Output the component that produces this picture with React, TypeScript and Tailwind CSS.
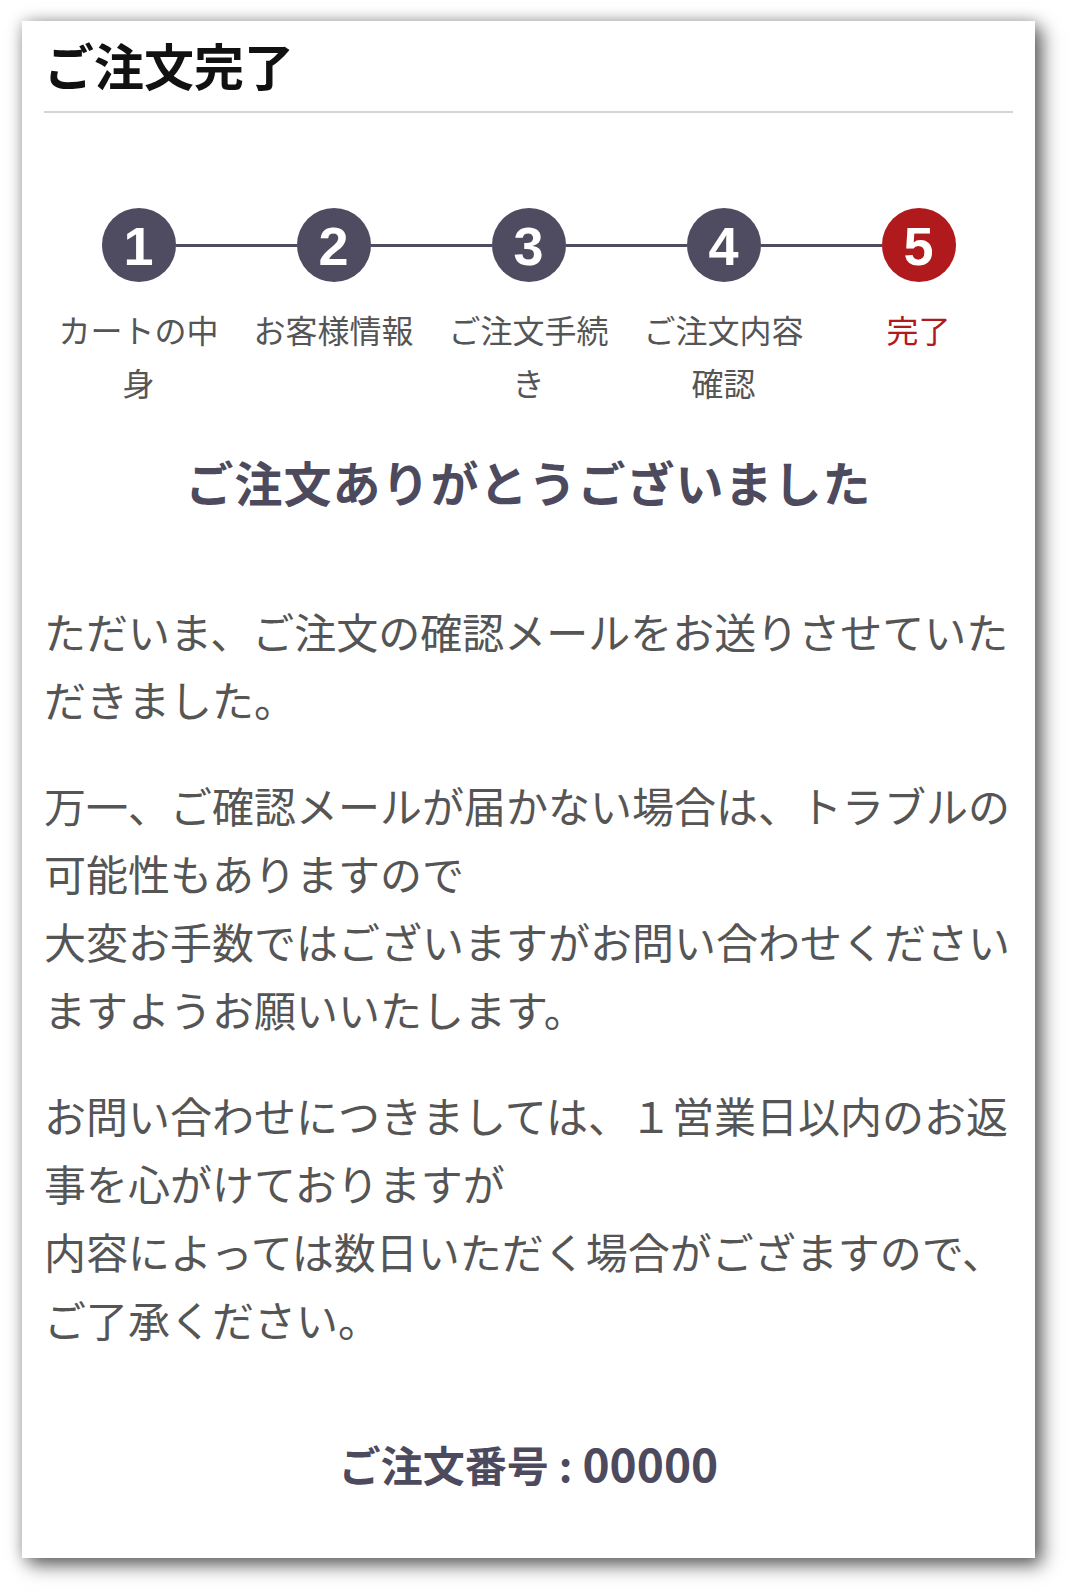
import React from "react";

type Step = { num: number; label: string; active?: boolean };

const steps: Step[] = [
  { num: 1, label: "カートの中身" },
  { num: 2, label: "お客様情報" },
  { num: 3, label: "ご注文手続き" },
  { num: 4, label: "ご注文内容確認" },
  { num: 5, label: "完了", active: true },
];

function StepItem({ step, first, last }: { step: Step; first: boolean; last: boolean }) {
  return (
    <div className="flex w-[195px] shrink-0 flex-col items-center">
      <div className="flex h-[74px] w-full items-center">
        <div className={first ? "h-[3px] flex-1" : "h-[3px] flex-1 bg-[#4f4c61]"} />
        <div
          className={
            step.active
              ? "flex h-[74px] w-[74px] shrink-0 items-center justify-center rounded-full bg-[#b11a1d]"
              : "flex h-[74px] w-[74px] shrink-0 items-center justify-center rounded-full bg-[#4f4c61]"
          }
        >
          <span className="pt-[2px] font-['Liberation_Sans',Arial,sans-serif] text-[54px] font-bold leading-none text-white">
            {step.num}
          </span>
        </div>
        <div className={last ? "h-[3px] flex-1" : "h-[3px] flex-1 bg-[#4f4c61]"} />
      </div>
      <div
        className={
          step.active
            ? "mt-[21px] w-[176px] text-center text-[32px] leading-[53px] text-[#b11a1d]"
            : "mt-[21px] w-[176px] text-center text-[32px] leading-[53px] text-[#555555]"
        }
      >
        {step.label}
      </div>
    </div>
  );
}

export default function App() {
  return (
    <div className="h-[1592px] w-[1069px] overflow-hidden bg-white pl-[22px] pt-[21px] font-['Noto_Sans_CJK_JP','Noto_Sans',sans-serif]">
      <div className="h-[1537px] w-[1013px] bg-white px-[22px] pt-[18px] shadow-[7px_7px_18px_rgba(0,0,0,0.6),0_0_14px_rgba(0,0,0,0.22)]">
        <h1 className="text-[50px] font-bold leading-[50px] text-[#111111]">ご注文完了</h1>
        <div className="mt-[22px] h-[2px] bg-[#d4d4d4]" />

        <div className="mt-[95px] flex justify-center">
          {steps.map((s, i) => (
            <StepItem key={s.num} step={s} first={i === 0} last={i === steps.length - 1} />
          ))}
        </div>

        <h2 className="mt-[42px] text-center text-[48px] font-bold leading-[60px] tracking-[1px] text-[#4d4a5e]">
          ご注文ありがとうございました
        </h2>

        <div className="mt-[86px] text-[42px] leading-[68px] text-[#555555]">
          <p>
            ただいま、ご注文の確認メールをお送りさせていた
            <br />
            だきました。
          </p>
          <p className="mt-[38px]">
            万一、ご確認メールが届かない場合は、トラブルの
            <br />
            可能性もありますので
            <br />
            大変お手数ではございますがお問い合わせください
            <br />
            ますようお願いいたします。
          </p>
          <p className="mt-[38px]">
            お問い合わせにつきましては、１営業日以内のお返
            <br />
            事を心がけておりますが
            <br />
            内容によっては数日いただく場合がござますので、
            <br />
            ご了承ください。
          </p>
        </div>

        <div className="mt-[79px] flex items-baseline justify-center font-bold leading-[60px] text-[#4d4a5e]">
          <span className="text-[42px]">ご注文番号</span>
          <span className="mx-[10px] text-[42px]">:</span>
          <span className="text-[46px]">00000</span>
        </div>
      </div>
    </div>
  );
}
